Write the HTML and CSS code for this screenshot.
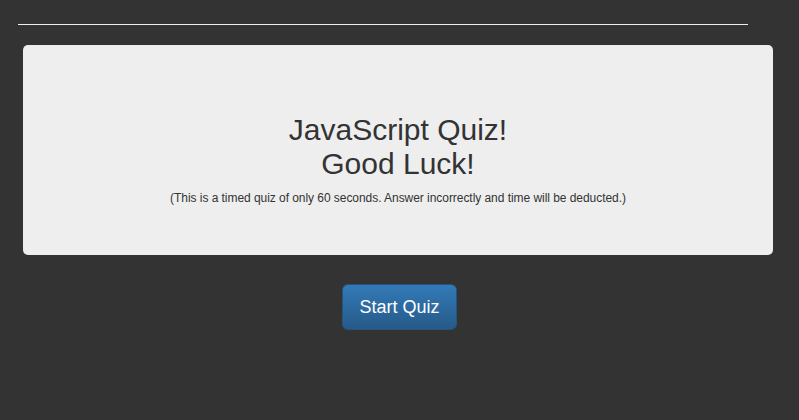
FILE: index.html
```html
<!DOCTYPE html>
<html>
<head>
<meta charset="utf-8">
<link rel="stylesheet" href="styles.css">
</head>
<body>
<header class="top">
  <hr class="rule">
</header>
<main>
  <section class="card">
    <h1 class="title">JavaScript Quiz!<br>Good Luck!</h1>
    <p class="note">(This is a timed quiz of only 60 seconds. Answer incorrectly and time will be deducted.)</p>
  </section>
  <div class="actions">
    <button class="btn">Start Quiz</button>
  </div>
</main>
</body>
</html>
```
FILE: styles.css
```css
html, body {
  margin: 0;
  padding: 0;
  background: #333333;
  font-family: "Liberation Sans", Arial, sans-serif;
}
.top {
  padding: 24px 51px 0 18px;
}
.rule {
  margin: 0;
  border: 0;
  height: 1px;
  background: #eeeeee;
}
.card {
  margin: 20px 26px 0 23px;
  background: #eeeeee;
  border-radius: 5px;
  padding: 68px 20px 47px;
  text-align: center;
  color: #333333;
}
.title {
  margin: 0;
  font-size: 30px;
  font-weight: 400;
  line-height: 34px;
}
.note {
  margin: 7px 0 0;
  font-size: 12px;
  line-height: 20px;
  letter-spacing: -0.05px;
}
.actions {
  display: flex;
  justify-content: center;
  margin-top: 29px;
}
.btn {
  font-family: "Liberation Sans", Arial, sans-serif;
  font-size: 18px;
  line-height: 24px;
  padding: 10px 16px;
  color: #ffffff;
  background: linear-gradient(to bottom, #337ab7 0%, #265a88 100%);
  border: 1px solid #245580;
  border-radius: 6px;
  cursor: pointer;
}
```
